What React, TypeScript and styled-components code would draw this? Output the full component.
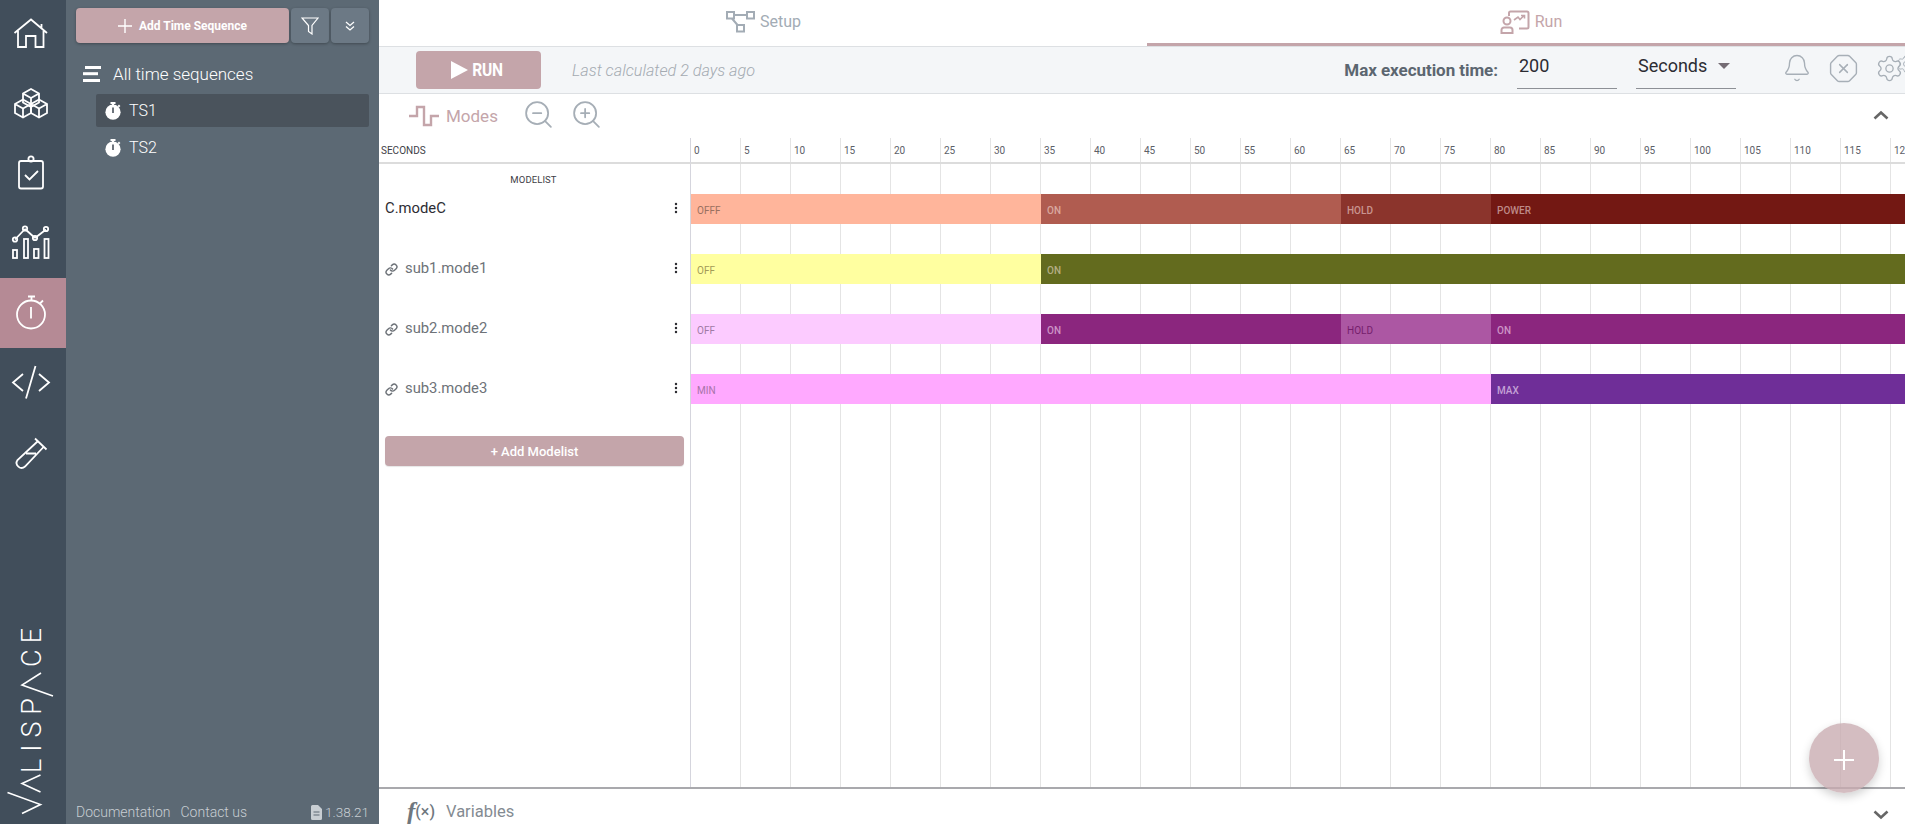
import React from "react";
import styled, { createGlobalStyle } from "styled-components";
import { Bell, OctagonX, Settings, ZoomIn, ZoomOut, Link as LinkIcon, EllipsisVertical } from "lucide-react";

const Global = createGlobalStyle`
  html, body { margin: 0; padding: 0; height: 100%; overflow: hidden; background: #fff; }
  body { font-family: Roboto, "Liberation Sans", sans-serif; }
  * { box-sizing: border-box; }
`;

const Page = styled.div`display:flex;width:1905px;height:824px;overflow:hidden;position:relative;`;
const Rail = styled.nav`width:66px;flex:none;background:#414e5b;display:flex;flex-direction:column;`;
const RailItem = styled.div<{ $active?: boolean }>`
  height:70px;flex:none;display:flex;align-items:center;justify-content:center;
  background:${p => (p.$active ? "#b58a95" : "transparent")};
  padding-right:4px;
  &:first-child{height:68px;}
  svg{fill:none;stroke:#fff;stroke-width:1.8;display:block;}
`;
const LogoBox = styled.div`
  margin-top:auto;height:196px;
  svg{display:block;}
  text{font-family:Roboto,sans-serif;font-weight:300;font-size:27px;fill:#fff;}
  polyline{fill:none;stroke:#fff;stroke-width:1.6;}
`;

const Panel = styled.aside`width:313px;flex:none;background:#5c6974;display:flex;flex-direction:column;padding:8px 10px 0 10px;`;
const PanelTop = styled.div`display:flex;gap:2px;height:35px;`;
const AddButton = styled.div`
  width:213px;background:#c4a5aa;border-radius:4px;color:#fff;font-weight:700;font-size:12px;
  display:flex;align-items:center;justify-content:center;gap:7px;box-shadow:0 1px 3px rgba(0,0,0,.3);
`;
const SquareButton = styled.div`
  width:38px;background:#6c7985;border-radius:4px;display:flex;align-items:center;justify-content:center;
  box-shadow:0 1px 3px rgba(0,0,0,.3);
  svg{display:block;fill:none;stroke:#fff;}
`;
const AllRow = styled.div`display:flex;align-items:center;gap:12px;height:24px;margin:19px 0 0 7px;color:#fff;font-size:17px;font-weight:300;`;
const SeqList = styled.div`margin:8px 0 0 20px;display:flex;flex-direction:column;gap:4px;`;
const SeqRow = styled.div<{ $active?: boolean }>`
  height:33px;border-radius:2px;display:flex;align-items:center;gap:8px;padding-left:9px;color:#fff;font-size:16px;font-weight:300;
  background:${p => (p.$active ? "#4a535c" : "transparent")};
`;
const PanelFooter = styled.div`
  margin-top:auto;height:24px;display:flex;align-items:center;color:#c8ced3;font-size:14px;font-weight:300;
`;
const FooterLink = styled.span`margin-right:10px;`;
const Version = styled.span`margin-left:auto;display:flex;align-items:center;gap:3px;font-size:13.5px;`;

const Main = styled.main`flex:1;min-width:0;display:flex;flex-direction:column;`;
const Tabs = styled.div`height:47px;flex:none;display:flex;border-bottom:1px solid #dde0e3;`;
const Tab = styled.div<{ $active?: boolean }>`
  flex:${p => (p.$active ? "0 0 758px" : "0 0 768px")};height:46px;display:flex;align-items:center;justify-content:center;gap:5px;font-size:16px;font-weight:400;
  color:${p => (p.$active ? "#c4a5aa" : "#a3acb5")};
  border-bottom:3px solid ${p => (p.$active ? "#c4a5aa" : "transparent")};
  padding-left:${p => (p.$active ? "10px" : "0")};
  svg{fill:none;stroke:currentColor;stroke-width:2;display:block;}
`;
const Toolbar = styled.div`height:47px;flex:none;background:#f4f6f8;border-bottom:1px solid #dde0e3;display:flex;align-items:center;padding-left:37px;`;
const RunButton = styled.div`
  width:125px;height:38px;margin-top:-1px;background:#c4a5aa;border-radius:4px;color:#fff;font-weight:700;
  display:flex;align-items:center;justify-content:center;gap:1px;
`;
const RunLabel = styled.span`font-size:19px;transform:scaleX(.82);letter-spacing:-.3px;`;
const LastCalc = styled.span`margin-left:31px;color:#a4abb2;font-style:italic;font-weight:300;font-size:16.2px;`;
const MaxLabel = styled.span`margin-left:auto;color:#5c6670;font-weight:700;font-size:17px;letter-spacing:-.05px;`;
const FieldBox = styled.div<{ $w: number }>`
  width:${p => p.$w}px;height:38px;margin-left:19px;border-bottom:1px solid #8d9096;color:#2c2c33;font-size:18px;
  display:flex;align-items:flex-start;justify-content:space-between;padding:0 2px;line-height:30px;font-weight:400;
`;
const Caret = styled.span`width:0;height:0;margin:12px 4px 0 0;border-left:6px solid transparent;border-right:6px solid transparent;border-top:6px solid #746c74;`;
const ToolIcons = styled.div`
  margin:-4px -16px 0 46px;width:139px;flex:none;display:flex;align-items:center;gap:16px;overflow:hidden;
  color:#a7afb7;
  svg{display:block;flex:none;}
`;
const Gears = styled.div`display:flex;align-items:center;width:48px;flex:none;svg+svg{margin-left:-8px;margin-top:-9px;}`;

const ModesBar = styled.div`height:44px;flex:none;display:flex;align-items:center;padding:0 16px 0 30px;color:#c4a5aa;font-size:17px;font-weight:400;svg{display:block;}`;
const ModesLabel = styled.span`margin-left:7px;`;
const ZoomBtn = styled.span<{ $gap: number }>`margin-left:${p => p.$gap}px;color:#a6aeb6;margin-top:-3px;`;
const Chevron = styled.span`margin-left:auto;color:#666;margin-top:-2px;`;

const Chart = styled.div`flex:1;min-height:0;display:grid;grid-template-columns:312px 1fr;grid-template-rows:26px 1fr;overflow:hidden;`;
const CornerCell = styled.div`border-bottom:2px solid #dcdcdc;border-right:1px solid #d5d5dd;font-size:10px;color:#3e3e46;padding:7px 0 0 2px;`;
const TickRow = styled.div`border-bottom:2px solid #dcdcdc;display:flex;overflow:hidden;`;
const Tick = styled.div`width:50px;flex:none;border-right:1px solid #e4e4e4;font-size:10px;color:#5c6068;padding:7px 0 0 3px;`;
const Names = styled.div`border-right:1px solid #d5d5dd;display:flex;flex-direction:column;`;
const NamesTitle = styled.div`height:30px;text-align:center;font-size:9.5px;color:#3e3e46;padding-top:10px;letter-spacing:.1px;margin-left:-2px;`;
const NameRow = styled.div<{ $own?: boolean }>`
  height:30px;margin-bottom:30px;display:flex;align-items:center;padding:0 7px 2px 6px;font-size:14.8px;font-weight:400;
  color:${p => (p.$own ? "#2d2d33" : "#6d7278")};
  svg{display:block;flex:none;}
`;
const NameText = styled.span`flex:1;`;
const LinkWrap = styled.span`margin-right:7px;color:#6d7278;margin-top:2px;`;
const Kebab = styled.span`color:#2d2d33;`;
const AddModelist = styled.div`
  height:30px;margin:2px 6px 0 6px;background:#c4a5aa;border-radius:4px;color:#fff;font-size:13px;font-weight:500;
  display:flex;align-items:center;justify-content:center;box-shadow:0 1px 1px rgba(0,0,0,.1);
`;
const Lanes = styled.div`
  padding-top:30px;overflow:hidden;
  background-image:repeating-linear-gradient(to right,transparent 0,transparent 49px,#e4e4e4 49px,#e4e4e4 50px);
`;
const Lane = styled.div`height:30px;margin-bottom:30px;display:flex;`;
const Seg = styled.div<{ $span?: number; $bg: string; $fg: string; $bold?: boolean }>`
  ${p => (p.$span ? `width:${p.$span * 10}px;flex:none;` : "flex:1;")}
  background:${p => p.$bg};color:${p => p.$fg};font-size:10px;font-weight:${p => (p.$bold ? 500 : 400)};
  display:flex;align-items:center;padding:3px 0 0 6px;
`;

const BottomBar = styled.div`
  height:37px;flex:none;border-top:2px solid #a9a9ad;display:flex;align-items:center;padding:10px 16px 0 28px;color:#848b92;font-size:16.5px;font-weight:400;
`;
const Fx = styled.span`margin-right:7px;color:#6f777e;display:inline-flex;align-items:center;width:32px;`;
const FxF = styled.span`font-family:"Liberation Serif",serif;font-style:italic;font-size:25px;font-weight:700;line-height:20px;`;
const FxX = styled.span`font-size:16px;font-weight:500;`;
const BottomChevron = styled.span`margin-left:auto;color:#666;margin-top:5px;`;
const Fab = styled.div`
  position:absolute;left:1809px;top:723px;width:70px;height:70px;border-radius:50%;background:rgba(200,170,176,.78);
  display:flex;align-items:center;justify-content:center;box-shadow:0 4px 10px rgba(0,0,0,.18);padding-top:4px;
  svg{display:block;}
`;

const cube = (cx: number, cy: number) =>
  `M${cx} ${cy - 9}L${cx + 8} ${cy - 4.5}V${cy + 4.5}L${cx} ${cy + 9}L${cx - 8} ${cy + 4.5}V${cy - 4.5}ZM${cx - 8} ${cy - 4.5}L${cx} ${cy}L${cx + 8} ${cy - 4.5}M${cx} ${cy}V${cy + 9}`;

const RailIcon = ({ cy, children }: { cy: number; children: React.ReactNode }) => (
  <svg width="46" height="46" viewBox={`8 ${cy - 23} 46 46`}>{children}</svg>
);

const Stopwatch = () => (
  <svg width="16" height="18" viewBox="0 0 16 18">
    <rect x="5.5" y="0" width="5" height="2" fill="#fff" />
    <rect x="7" y="1" width="2" height="3" fill="#fff" />
    <rect x="13" y="3" width="2" height="2" fill="#fff" transform="rotate(45 14 4)" />
    <circle cx="8" cy="10.2" r="7.6" fill="#fff" />
    <rect x="7.2" y="5.5" width="1.6" height="5.5" fill="#4a535c" />
  </svg>
);

const ChevUp = () => (
  <svg width="16" height="10" viewBox="0 0 16 10" fill="none" stroke="currentColor" strokeWidth="2.6"><path d="M1.5 8.5L8 2.5L14.5 8.5" /></svg>
);
const ChevDown = () => (
  <svg width="16" height="10" viewBox="0 0 16 10" fill="none" stroke="currentColor" strokeWidth="2.6"><path d="M1.5 1.5L8 7.5L14.5 1.5" /></svg>
);

const ticks = Array.from({ length: 25 }, (_, i) => i * 5);
const names = [
  { n: "C.modeC", own: true },
  { n: "sub1.mode1" },
  { n: "sub2.mode2" },
  { n: "sub3.mode3" },
];

export default function App() {
  return (
    <Page>
      <Global />
      <Rail>
        <RailItem>
          <RailIcon cy={33}>
            <path d="M14.5 32L31 18.5L47 32M41.5 23V28M18 30V46H26V35H35.5V46H43.5V30" />
          </RailIcon>
        </RailItem>
        <RailItem>
          <RailIcon cy={103}>
            <path d={cube(31, 98)} />
            <path d={cube(23, 108.5)} />
            <path d={cube(39, 108.5)} />
          </RailIcon>
        </RailItem>
        <RailItem>
          <RailIcon cy={173}>
            <rect x="19" y="161" width="24" height="27.5" rx="2" />
            <circle cx="31" cy="159" r="2.6" />
            <path d="M25 175L29.5 179.5L38 171" />
          </RailIcon>
        </RailItem>
        <RailItem>
          <RailIcon cy={243}>
            <path d="M15 239.5L25 229M25 229L35 238M35 238L46 229.5" />
            <circle cx="15" cy="239.5" r="2.2" />
            <circle cx="25" cy="228.5" r="2.2" />
            <circle cx="35" cy="238" r="2.2" />
            <circle cx="46" cy="229" r="2.2" />
            <rect x="13" y="250" width="4" height="8" />
            <rect x="24" y="239" width="4" height="19" />
            <rect x="34" y="249" width="4.5" height="9" />
            <rect x="44.5" y="239" width="4" height="19" />
          </RailIcon>
        </RailItem>
        <RailItem $active>
          <RailIcon cy={313}>
            <circle cx="31" cy="314.5" r="14" />
            <path d="M28 296.5H35M31.5 296.5V300.5M40 303.5L43 300.5M31 307V318.5" />
          </RailIcon>
        </RailItem>
        <RailItem>
          <RailIcon cy={383}>
            <path d="M23 374L13 382.5L23 391M35.5 366L26 398.5M39 374L49 382.5L39 391" />
          </RailIcon>
        </RailItem>
        <RailItem>
          <RailIcon cy={453}>
            <path d="M35 438.5L46.5 449.5M38 441L17.5 460A5 5 0 0 0 25 466.5L44 446.5M26 453.5H36" />
          </RailIcon>
        </RailItem>
        <LogoBox>
          <svg width="66" height="196" viewBox="0 628 66 196">
            <polyline points="7.5,792.5 40.5,804.5 22,813.5" />
            <polyline points="40.5,775 22,783.5 40.5,792" />
            <text transform="translate(41,773) rotate(-90)" textLength="75" lengthAdjust="spacing">LISP</text>
            <polyline points="53,696 22,685 41,673" />
            <text transform="translate(41,667) rotate(-90)" textLength="39" lengthAdjust="spacing">CE</text>
          </svg>
        </LogoBox>
      </Rail>

      <Panel>
        <PanelTop>
          <AddButton>
            <svg width="14" height="14" viewBox="0 0 14 14" stroke="#fff" strokeWidth="1.4"><path d="M7 0V14M0 7H14" /></svg>
            Add Time Sequence
          </AddButton>
          <SquareButton>
            <svg width="18" height="18" viewBox="0 0 18 18" strokeWidth="1.2"><path d="M1 1H17L11 8.5V17L7.5 14.5V8.5Z" /></svg>
          </SquareButton>
          <SquareButton>
            <svg width="10" height="10" viewBox="0 0 10 10" strokeWidth="1.3"><path d="M1 1L5 4.5L9 1M1 5.5L5 9L9 5.5" /></svg>
          </SquareButton>
        </PanelTop>
        <AllRow>
          <svg width="18" height="16" viewBox="0 0 18 16" fill="#fff"><rect x="2" y="0" width="16" height="3" /><rect x="0" y="6.2" width="15" height="3" /><rect x="0" y="13" width="17" height="3" /></svg>
          All time sequences
        </AllRow>
        <SeqList>
          <SeqRow $active><Stopwatch />TS1</SeqRow>
          <SeqRow><Stopwatch />TS2</SeqRow>
        </SeqList>
        <PanelFooter>
          <FooterLink>Documentation</FooterLink>
          <FooterLink>Contact us</FooterLink>
          <Version>
            <svg width="11" height="15" viewBox="0 0 11 15"><path d="M0 1.5A1.5 1.5 0 0 1 1.5 0H7L11 4V13.5A1.5 1.5 0 0 1 9.5 15H1.5A1.5 1.5 0 0 1 0 13.5Z" fill="#c8ced3" /><path d="M2.5 7H8.5M2.5 10H8.5" stroke="#5c6974" strokeWidth="1.2" /></svg>
            1.38.21
          </Version>
        </PanelFooter>
      </Panel>

      <Main>
        <Tabs>
          <Tab>
            <svg width="30" height="23" viewBox="0 0 30 23">
              <rect x="2" y="2" width="7" height="6.5" />
              <rect x="22" y="2" width="7" height="6.5" />
              <rect x="12" y="15" width="7" height="6.5" />
              <path d="M9 5H22M7 8.5L12.5 15" />
            </svg>
            Setup
          </Tab>
          <Tab $active>
            <svg width="30" height="24" viewBox="0 0 30 24">
              <path d="M9 6V3A1.5 1.5 0 0 1 10.500 1.500H27A1.500 1.500 0 0 1 28.500 3V17A1.500 1.500 0 0 1 27 18.500H19" />
              <path d="M14 10L18 7L20 9.500L24 5.500M21 5.500H24.500V8.500" strokeWidth="1.600" />
              <circle cx="7" cy="11" r="3.500" />
              <path d="M1.500 23V20A2.500 2.500 0 0 1 4 17.500H10A2.500 2.500 0 0 1 12.500 20V23Z" />
            </svg>
            Run
          </Tab>
        </Tabs>
        <Toolbar>
          <RunButton>
            <svg width="17" height="20" viewBox="0 0 17 20" fill="#fff"><path d="M0 1L17 10L0 19Z" /></svg>
            <RunLabel>RUN</RunLabel>
          </RunButton>
          <LastCalc>Last calculated 2 days ago</LastCalc>
          <MaxLabel>Max execution time:</MaxLabel>
          <FieldBox $w={100}>200</FieldBox>
          <FieldBox $w={100}>Seconds<Caret /></FieldBox>
          <ToolIcons>
            <Bell size={30} strokeWidth={1.1} />
            <OctagonX size={31} strokeWidth={1.1} />
            <Gears>
              <Settings size={29} strokeWidth={1.1} />
              <Settings size={20} strokeWidth={1.1} />
            </Gears>
          </ToolIcons>
        </Toolbar>
        <ModesBar>
          <svg width="30" height="24" viewBox="0 0 30 24" fill="none" stroke="currentColor" strokeWidth="2.4">
            <path d="M0 12H8V3H15V21H22V12H30" />
          </svg>
          <ModesLabel>Modes</ModesLabel>
          <ZoomBtn $gap={24}><ZoomOut size={33} strokeWidth={1.3} /></ZoomBtn>
          <ZoomBtn $gap={15}><ZoomIn size={33} strokeWidth={1.3} /></ZoomBtn>
          <Chevron><ChevUp /></Chevron>
        </ModesBar>
        <Chart>
          <CornerCell>SECONDS</CornerCell>
          <TickRow>{ticks.map(t => <Tick key={t}>{t}</Tick>)}</TickRow>
          <Names>
            <NamesTitle>MODELIST</NamesTitle>
            {names.map(r => (
              <NameRow key={r.n} $own={r.own}>
                {!r.own && <LinkWrap><LinkIcon size={13} strokeWidth={2.6} /></LinkWrap>}
                <NameText>{r.n}</NameText>
                <Kebab><EllipsisVertical size={14} strokeWidth={2.2} /></Kebab>
              </NameRow>
            ))}
            <AddModelist>+ Add Modelist</AddModelist>
          </Names>
          <Lanes>
            <Lane>
              <Seg $span={35} $bg="#ffb59b" $fg="#99705f">OFFF</Seg>
              <Seg $span={30} $bg="#b05c50" $fg="#d9a89f" $bold>ON</Seg>
              <Seg $span={15} $bg="#8b342c" $fg="#c99490" $bold>HOLD</Seg>
              <Seg $bg="#731813" $fg="#bd8a88" $bold>POWER</Seg>
            </Lane>
            <Lane>
              <Seg $span={35} $bg="#ffffa0" $fg="#a39a58">OFF</Seg>
              <Seg $bg="#636b1e" $fg="#b5ae84" $bold>ON</Seg>
            </Lane>
            <Lane>
              <Seg $span={35} $bg="#fccbff" $fg="#a07aa4">OFF</Seg>
              <Seg $span={30} $bg="#8b267e" $fg="#cd94c6" $bold>ON</Seg>
              <Seg $span={15} $bg="#ac57a3" $fg="#751e6c">HOLD</Seg>
              <Seg $bg="#8b267e" $fg="#cd94c6" $bold>ON</Seg>
            </Lane>
            <Lane>
              <Seg $span={80} $bg="#ffa9ff" $fg="#a873a8">MIN</Seg>
              <Seg $bg="#6f2e98" $fg="#c4a2d6" $bold>MAX</Seg>
            </Lane>
          </Lanes>
        </Chart>
        <BottomBar>
          <Fx><FxF>f</FxF><FxX>(×)</FxX></Fx>
          Variables
          <BottomChevron><ChevDown /></BottomChevron>
        </BottomBar>
      </Main>
      <Fab>
        <svg width="20" height="20" viewBox="0 0 20 20" stroke="#fff" strokeWidth="2"><path d="M10 0V20M0 10H20" /></svg>
      </Fab>
    </Page>
  );
}
